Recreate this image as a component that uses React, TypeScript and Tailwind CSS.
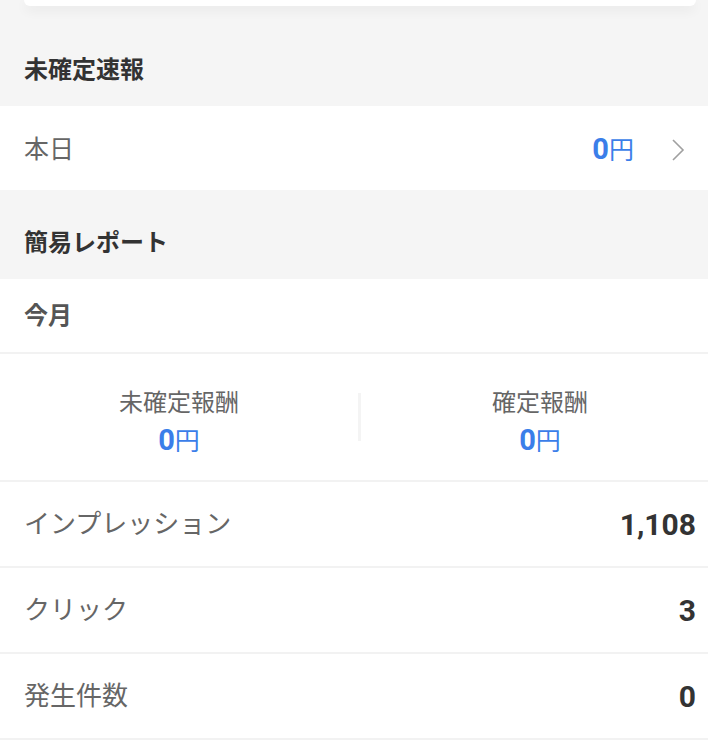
import React from "react";

const FONT = "font-['Roboto','Noto_Sans_CJK_JP',sans-serif]";

const Yen: React.FC<{ value: string }> = ({ value }) => (
  <span className="text-[#3b7ee9] leading-none">
    <span className="text-[29px] font-bold">{value}</span>
    <span className="text-[25px]">円</span>
  </span>
);

const SectionHeader: React.FC<{ title: string }> = ({ title }) => (
  <div className="flex h-[72px] items-center px-6">
    <h2 className="text-[24px] font-bold text-[#333]">{title}</h2>
  </div>
);

const MetricRow: React.FC<{ label: string; value: string }> = ({
  label,
  value,
}) => (
  <div className="flex h-[86px] items-center justify-between border-b-2 border-[#f2f2f2] px-6">
    <span className="text-[26px] text-[#666]">{label}</span>
    <span className="text-[30px] font-bold text-[#333]">{value}</span>
  </div>
);

const ChevronRight: React.FC = () => (
  <svg width="14" height="24" viewBox="0 0 14 24" fill="none">
    <polyline
      points="2,2 12,12 2,22"
      stroke="#a0a0a0"
      strokeWidth="1.6"
      strokeLinejoin="miter"
    />
  </svg>
);

const App: React.FC = () => {
  return (
    <div className={`w-full min-h-[751px] overflow-hidden bg-[#f5f5f5] ${FONT}`}>
      <div className="w-[720px]">
        {/* top card (mostly scrolled away) */}
        <div className="mx-6 h-[6px] rounded-b-[10px] bg-white shadow-[0_4px_12px_rgba(0,0,0,0.07)]" />
        <div className="h-[28px]" />

        <SectionHeader title="未確定速報" />
        <div className="flex h-[84px] items-center justify-between bg-white pl-6 pr-[35px]">
          <span className="pt-[3px] text-[25px] text-[#666]">本日</span>
          <div className="flex items-center gap-[37px] pt-[3px]">
            <Yen value="0" />
            <ChevronRight />
          </div>
        </div>

        <div className="h-[17px]" />
        <SectionHeader title="簡易レポート" />

        <div className="bg-white">
          <div className="flex h-[75px] items-center border-b-2 border-[#f2f2f2] px-6">
            <span className="text-[24px] font-bold text-[#555]">今月</span>
          </div>

          <div className="flex h-[128px] items-center border-b-2 border-[#f2f2f2]">
            <div className="flex w-[358px] flex-col items-center gap-[5px] pt-[5px]">
              <span className="text-[24px] text-[#666]">未確定報酬</span>
              <Yen value="0" />
            </div>
            <div className="h-[48px] w-[3px] bg-[#f4f4f4]" />
            <div className="flex w-[358px] flex-col items-center gap-[5px] pt-[5px]">
              <span className="text-[24px] text-[#666]">確定報酬</span>
              <Yen value="0" />
            </div>
          </div>

          <MetricRow label="インプレッション" value="1,108" />
          <MetricRow label="クリック" value="3" />
          <MetricRow label="発生件数" value="0" />
          <div className="h-[40px]" />
        </div>
      </div>
    </div>
  );
};

export default App;
